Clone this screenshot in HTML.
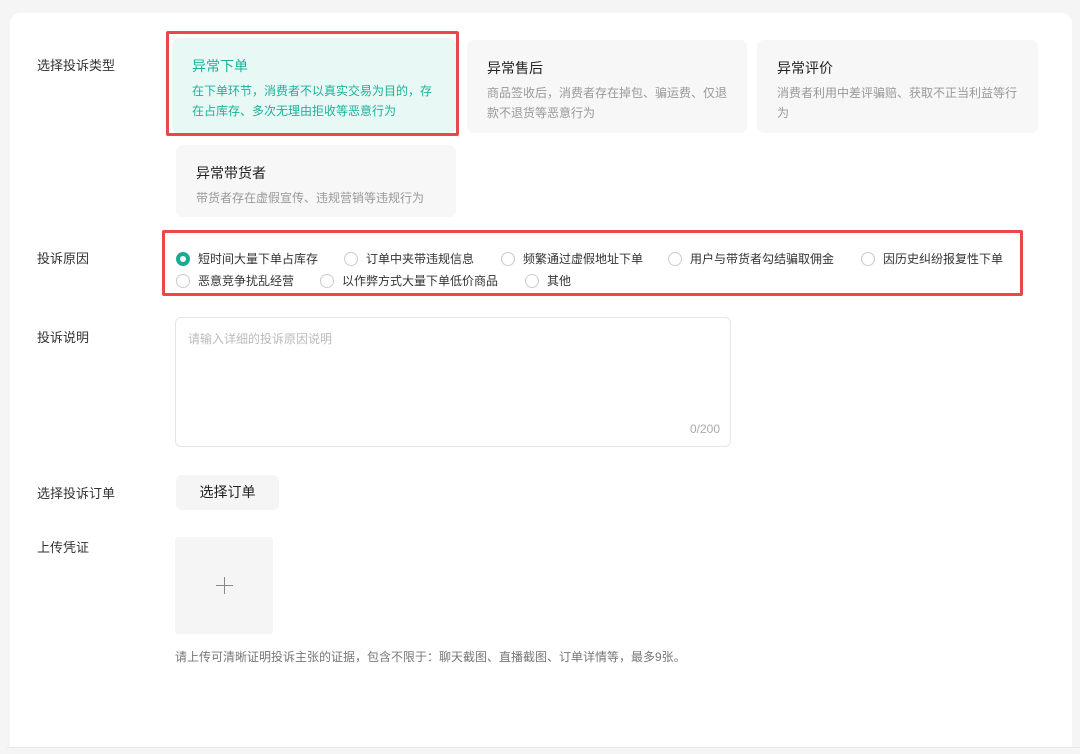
<!DOCTYPE html>
<html><head><meta charset="utf-8"><style>
*{box-sizing:border-box;margin:0;padding:0}
body{width:1080px;height:754px;background:#f5f5f5;font-family:"Liberation Sans","Noto Sans CJK SC",sans-serif;position:relative;overflow:hidden;color:#333}
.main{position:absolute;left:10px;top:13px;width:1062px;height:734px;background:#fff;border-radius:10px 10px 0 0}
.line{position:absolute;left:7px;top:747px;width:1073px;height:1px;background:#e8e8e8}
.lbl{position:absolute;left:37px;font-size:13px;color:#333}
.card{position:absolute;background:#f7f7f7;border-radius:7px;padding:18px 18px 0 20px}
.card h4{font-size:14px;font-weight:normal;color:#222;margin-bottom:5px}
.card p{font-size:12px;color:#999;line-height:20px}
.sel{background:#e8f8f4}
.sel h4,.sel p{color:#1bb29c}
.red{position:absolute;border:3px solid #e9474c;border-radius:2px}
.r{position:absolute;font-size:12px;color:#333;display:flex;align-items:center;white-space:nowrap}
.r i{display:inline-block;width:14px;height:14px;border:1px solid #ccc;border-radius:50%;margin-right:8px}
.r i.on{border:4px solid #1bab93}
</style></head><body>
<div class="main"></div>
<div class="line"></div>
<div class="lbl" style="top:55px">选择投诉类型</div>
<div class="card sel" style="left:172px;top:38px;width:284px;height:95px"><h4>异常下单</h4><p>在下单环节，消费者不以真实交易为目的，存在占库存、多次无理由拒收等恶意行为</p></div>
<div class="red" style="left:166px;top:31px;width:293px;height:105px"></div>
<div class="card" style="left:467px;top:40px;width:280px;height:93px"><h4>异常售后</h4><p>商品签收后，消费者存在掉包、骗运费、仅退款不退货等恶意行为</p></div>
<div class="card" style="left:757px;top:40px;width:281px;height:93px"><h4>异常评价</h4><p>消费者利用中差评骗赔、获取不正当利益等行为</p></div>
<div class="card" style="left:176px;top:145px;width:280px;height:72px"><h4>异常带货者</h4><p>带货者存在虚假宣传、违规营销等违规行为</p></div>
<div class="lbl" style="top:248px">投诉原因</div>
<div class="red" style="left:162px;top:230px;width:861px;height:66px"></div>
<div class="r" style="left:176px;top:250px"><i class="on"></i>短时间大量下单占库存</div>
<div class="r" style="left:344px;top:250px"><i></i>订单中夹带违规信息</div>
<div class="r" style="left:501px;top:250px"><i></i>频繁通过虚假地址下单</div>
<div class="r" style="left:668px;top:250px"><i></i>用户与带货者勾结骗取佣金</div>
<div class="r" style="left:861px;top:250px"><i></i>因历史纠纷报复性下单</div>
<div class="r" style="left:176px;top:272px"><i></i>恶意竞争扰乱经营</div>
<div class="r" style="left:320px;top:272px"><i></i>以作弊方式大量下单低价商品</div>
<div class="r" style="left:525px;top:272px"><i></i>其他</div>
<div class="lbl" style="top:327px">投诉说明</div>
<div style="position:absolute;left:175px;top:317px;width:556px;height:130px;border:1px solid #e6e6e6;border-radius:6px">
<div style="position:absolute;left:12px;top:12px;font-size:12px;color:#bbb">请输入详细的投诉原因说明</div>
<div style="position:absolute;right:10px;bottom:10px;font-size:12px;color:#aaa">0/200</div></div>
<div class="lbl" style="top:483px">选择投诉订单</div>
<div style="position:absolute;left:176px;top:475px;width:103px;height:35px;background:#f5f5f5;border-radius:6px;font-size:14px;color:#222;text-align:center;line-height:35px">选择订单</div>
<div class="lbl" style="top:537px">上传凭证</div>
<div style="position:absolute;left:175px;top:537px;width:98px;height:97px;background:#f5f5f5;border-radius:3px"></div>
<div style="position:absolute;left:216px;top:585px;width:17px;height:1px;background:#888"></div>
<div style="position:absolute;left:224px;top:577px;width:1px;height:17px;background:#888"></div>
<div style="position:absolute;left:175px;top:648px;font-size:12px;color:#777">请上传可清晰证明投诉主张的证据，包含不限于：聊天截图、直播截图、订单详情等，最多9张。</div>
</body></html>
